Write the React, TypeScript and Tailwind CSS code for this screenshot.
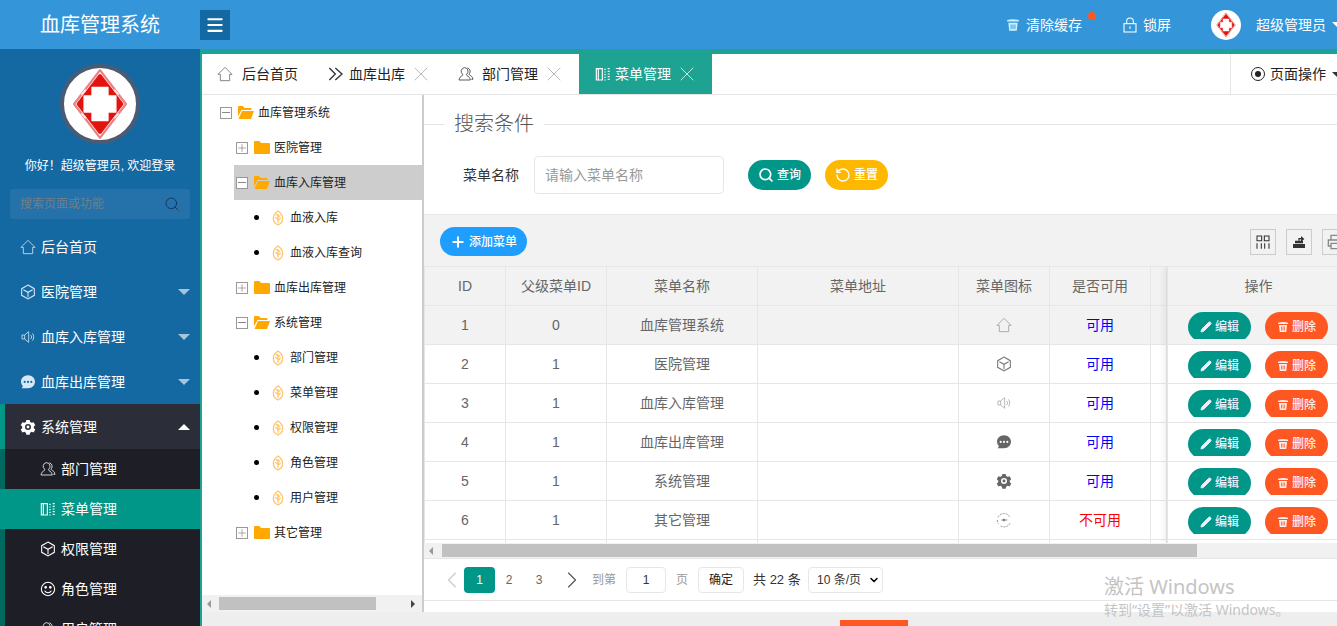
import { ChevronLeft, ChevronRight, Plus, X, Menu, Search, RotateCw, ChevronDown, Pencil } from 'lucide-react';

type IconProps = { className?: string };

const svgBase = { fill: 'none', stroke: 'currentColor', strokeWidth: 1.2, viewBox: '0 0 24 24' };

function HouseIcon({ className }: IconProps) {
  return (
    <svg {...svgBase} className={className}>
      <path d="M1.5 12.5 12 2l10.5 10.5H19V22H5v-9.5z" />
    </svg>
  );
}

function DoubleChevronIcon({ className }: IconProps) {
  return (
    <svg {...svgBase} strokeWidth={2} className={className}>
      <path d="M2 3l9 9-9 9M11 3l10 9-10 9" />
    </svg>
  );
}

function BoxIcon({ className }: IconProps) {
  return (
    <svg {...svgBase} strokeWidth={1.6} className={className}>
      <path d="M12 1.5 21.500 7v10L12 22.500 2.500 17V7z" />
      <path d="M5 8.500l7 4 7-4M12 12.500V20" />
    </svg>
  );
}

function SpeakerIcon({ className }: IconProps) {
  return (
    <svg {...svgBase} className={className}>
      <path d="M3 9h4l6-5v16l-6-5H3z" />
      <path d="M7 9v6M16 9a4 4 0 0 1 0 6M18.500 6.500a8 8 0 0 1 0 11" />
    </svg>
  );
}

function ChatIcon({ className }: IconProps) {
  return (
    <svg viewBox="0 0 24 24" fill="currentColor" className={className}>
      <path
        fillRule="evenodd"
        d="M12 2c5.800 0 10.500 4.300 10.500 9.800S17.800 21.500 12 21.500H2.500l1.900-3A9.600 9.600 0 0 1 1.500 11.800C1.500 6.300 6.200 2 12 2zM7 10.300a1.600 1.600 0 1 0 0 3.200 1.600 1.600 0 0 0 0-3.200zm5 0a1.600 1.600 0 1 0 0 3.200 1.600 1.600 0 0 0 0-3.200zm5 0a1.600 1.600 0 1 0 0 3.200 1.600 1.600 0 0 0 0-3.200z"
      />
    </svg>
  );
}

function GearIcon({ className }: IconProps) {
  return (
    <svg viewBox="0 0 24 24" fill="currentColor" className={className}>
      <path
        fillRule="evenodd"
        d="M9.500 1.500h5l.7 3 2.300 1.300 2.900-.9 2.500 4.300-2.200 2.100v2.400l2.200 2.100-2.500 4.300-2.900-.9-2.300 1.300-.7 3h-5l-.7-3-2.300-1.300-2.900.9L1.100 15.800l2.200-2.100v-2.400L1.100 9.200l2.500-4.300 2.900.9 2.300-1.300zM12 7.500a4.500 4.500 0 1 0 0 9 4.500 4.500 0 0 0 0-9zm0 2.300a2.200 2.200 0 1 1 0 4.400 2.200 2.200 0 0 1 0-4.400z"
      />
    </svg>
  );
}

function SpinnerIcon({ className }: IconProps) {
  return (
    <svg {...svgBase} className={className}>
      <path d="M20.500 7A10 10 0 0 0 3 8M2 12a10 10 0 0 0 1.500 5.500M7 21a10 10 0 0 0 14-4" strokeDasharray="3 1.500" />
      <path d="M8 12h9" />
      <circle cx="12" cy="12" r="1.500" fill="currentColor" />
    </svg>
  );
}

function UserIcon({ className }: IconProps) {
  return (
    <svg {...svgBase} className={className}>
      <path d="M9.500 2.500a5.500 5.500 0 0 1 3.500 9.800c-.5.700-.4 1.600.4 2 2.500 1.200 4.600 3.300 5 6.700H1.500c.4-3.400 2.500-5.500 5-6.700.8-.4.900-1.300.4-2A5.500 5.500 0 0 1 9.500 2.500z" />
      <path d="M14 2.800a5.500 5.500 0 0 1 3 8.800c-.5.800-.3 1.500.4 1.900 2.500 1.200 4.700 3.200 5.100 6.500H20" />
    </svg>
  );
}

function MenuBookIcon({ className }: IconProps) {
  return (
    <svg {...svgBase} strokeWidth={1.7} className={className}>
      <path d="M2 4h9v17H2zM5 4v17h6" />
      <path d="M14 5h2M14 9h2M14 13h2M14 17h2M14 21h2M19 4h3M19 8h3M19 12h3M19 16h3M19 20h3" />
    </svg>
  );
}

function SmileIcon({ className }: IconProps) {
  return (
    <svg {...svgBase} strokeWidth={1.6} className={className}>
      <circle cx="12" cy="12" r="10" />
      <circle cx="8.500" cy="9.500" r="1.200" fill="currentColor" />
      <circle cx="15.500" cy="9.500" r="1.200" fill="currentColor" />
      <path d="M7 14.500c1.200 2 3 3 5 3s3.800-1 5-3" />
    </svg>
  );
}

function TrashIcon({ className }: IconProps) {
  return (
    <svg viewBox="0 0 24 24" fill="currentColor" className={className}>
      <path
        fillRule="evenodd"
        d="M2 3.500c3-1 6.500-1.500 10-1.500s7 .5 10 1.500V6H2zM4 8h16l-1.500 14h-13zm4 3v8h1.500v-8zm3.300 0v8h1.500v-8zm3.300 0v8h1.500v-8z"
      />
    </svg>
  );
}

function LockIcon({ className }: IconProps) {
  return (
    <svg {...svgBase} strokeWidth={1.6} className={className}>
      <rect x="3" y="10" width="18" height="12.500" />
      <path d="M7 10V6.500a5 5 0 0 1 10 0V10M12 14v4" />
    </svg>
  );
}

function LeafIcon({ className }: IconProps) {
  return (
    <svg {...svgBase} strokeWidth={1.8} className={className}>
      <path d="M12 1.500c4.500 3 7 6.500 7 11 0 5-3 8.500-7 10-4-1.500-7-5-7-10 0-4.500 2.500-8 7-11z" />
      <path d="M12 6v14M12 11l3.500-3M12 15.500l4-3.500M12 9 9 6.500M12 14 8 11" />
    </svg>
  );
}

function FolderClosed({ className }: IconProps) {
  return (
    <svg viewBox="0 0 16 13" fill="#ffa800" className={className}>
      <path d="M0 1a1 1 0 0 1 1-1h4.500l1.500 2H15a1 1 0 0 1 1 1v9a1 1 0 0 1-1 1H1a1 1 0 0 1-1-1z" />
    </svg>
  );
}

function FolderOpen({ className }: IconProps) {
  return (
    <svg viewBox="0 0 16 13" fill="#ffa800" className={className}>
      <path d="M0 1a1 1 0 0 1 1-1h4l1.500 2h6a1 1 0 0 1 1 1v1H3.500L0 10.500z" />
      <path d="M4 5h12l-3 8H.5z" />
    </svg>
  );
}

function ExportIcon({ className }: IconProps) {
  return (
    <svg viewBox="0 0 24 24" fill="currentColor" className={className}>
      <path d="M3 15h18v6H3zM6 10h12v4H6z" />
      <path d="M11 10V6h4V3l5 4.500-5 4.500V8h-2v2z" />
    </svg>
  );
}

function PrintIcon({ className }: IconProps) {
  return (
    <svg {...svgBase} strokeWidth={2} className={className}>
      <path d="M6 8V2h12v6M6 18H2V9h20v9h-4M6 14h12v8H6z" />
    </svg>
  );
}

function ColumnsIcon({ className }: IconProps) {
  return (
    <svg {...svgBase} strokeWidth={1.6} className={className}>
      <path d="M3 3h7v7H3zM14 3h7v7h-7zM3 14v8M9.500 14v8M14.500 14v8M21 14v8" />
    </svg>
  );
}

function HospitalLogo({ className }: IconProps) {
  return (
    <svg viewBox="0 0 100 100" className={className}>
      <path d="M50 3 86 50 50 97 14 50z" fill="none" stroke="#ec7f84" strokeWidth="3" strokeLinejoin="round" />
      <path d="M50 11 80 50 50 89 20 50z" fill="#e1140f" stroke="#e1140f" strokeWidth="5" strokeLinejoin="round" />
      <path d="M39 27h22v12h11v22H61v12H39V61H28V39h11z" fill="#fff" stroke="#fff" strokeLinejoin="round" strokeWidth="2" />
      <path d="M30 30 24 37M70 30l6 7M30 70l-6-7M70 70l6-7" stroke="#fff" strokeWidth="2" />
    </svg>
  );
}

function TreeToggle({ open }: { open: boolean }) {
  return (
    <span className="flex h-[12px] w-[12px] shrink-0 items-center justify-center border border-[#999] bg-white">
      {open ? <span className="h-px w-[8px] bg-[#888]" /> : <Plus className="h-[12px] w-[12px] shrink-0 text-[#777]" strokeWidth={1.2} />}
    </span>
  );
}

const treeRows = [
  { label: '血库管理系统', level: 0, open: true },
  { label: '医院管理', level: 1, open: false },
  { label: '血库入库管理', level: 1, open: true, selected: true },
  { label: '血液入库', level: 2 },
  { label: '血液入库查询', level: 2 },
  { label: '血库出库管理', level: 1, open: false },
  { label: '系统管理', level: 1, open: true },
  { label: '部门管理', level: 2 },
  { label: '菜单管理', level: 2 },
  { label: '权限管理', level: 2 },
  { label: '角色管理', level: 2 },
  { label: '用户管理', level: 2 },
  { label: '其它管理', level: 1, open: false },
];

const menuRows = [
  { id: 1, parent: 0, name: '血库管理系统', icon: HouseIcon, cls: 'text-[#999]', enabled: true },
  { id: 2, parent: 1, name: '医院管理', icon: BoxIcon, cls: 'text-[#777]', enabled: true },
  { id: 3, parent: 1, name: '血库入库管理', icon: SpeakerIcon, cls: 'text-[#aaa]', enabled: true },
  { id: 4, parent: 1, name: '血库出库管理', icon: ChatIcon, cls: 'text-[#666]', enabled: true },
  { id: 5, parent: 1, name: '系统管理', icon: GearIcon, cls: 'text-[#666]', enabled: true },
  { id: 6, parent: 1, name: '其它管理', icon: SpinnerIcon, cls: 'text-[#777]', enabled: false },
];

const headers = ['ID', '父级菜单ID', '菜单名称', '菜单地址', '菜单图标', '是否可用', ''];

function SideItem({ icon: Icon, label, caret }: { icon: (p: IconProps) => React.ReactNode; label: string; caret?: boolean }) {
  return (
    <div className="flex h-[45px] items-center pl-5 pr-[10px] text-sm text-white">
      <Icon className="h-4 w-4 text-[#d7e8f5]" />
      <span className="ml-[5px] flex-1">{label}</span>
      {caret && <span className="border-x-[6px] border-t-[6px] border-x-transparent border-t-[#a9c4d9]" />}
    </div>
  );
}

function SubItem({ icon: Icon, label, active }: { icon: (p: IconProps) => React.ReactNode; label: string; active?: boolean }) {
  return (
    <div className={`flex h-10 items-center text-sm text-white ${active ? 'bg-[#009688] pl-10' : 'ml-[5px] bg-[#1e1f26] pl-[35px]'}`}>
      <Icon className="h-4 w-4" />
      <span className="ml-[5px]">{label}</span>
    </div>
  );
}

function Sidebar() {
  return (
    <aside className="flex w-[202px] shrink-0 flex-col overflow-hidden border-r-2 border-[#1ea292] bg-[#1569a3]">
      <div className="mx-auto mt-[15px] flex h-20 w-20 shrink-0 items-center justify-center rounded-full border-4 border-[#4a5b73] bg-white">
        <HospitalLogo className="h-[72px] w-[72px]" />
      </div>
      <p className="mt-3 h-5 shrink-0 text-center text-xs leading-5 text-white">你好！超级管理员, 欢迎登录</p>
      <div className="mx-[10px] mt-[13px] flex h-[30px] shrink-0 items-center justify-between rounded-sm bg-[#2472a9] px-[10px] text-xs text-[#6f7f8c]">
        <span>搜索页面或功能</span>
        <Search className="h-4 w-4 text-[#12385a]" strokeWidth={1.5} />
      </div>
      <nav className="mt-[5px] shrink-0">
        <SideItem icon={HouseIcon} label="后台首页" />
        <SideItem icon={BoxIcon} label="医院管理" caret />
        <SideItem icon={SpeakerIcon} label="血库入库管理" caret />
        <SideItem icon={ChatIcon} label="血库出库管理" caret />
        <div className="bg-[#00695f]">
          <div className="bg-[#009688] pl-[5px]">
            <div className="flex h-[45px] items-center bg-[#2b2e38] pl-[15px] pr-[10px] text-sm text-white">
              <GearIcon className="h-4 w-4" />
              <span className="ml-[5px] flex-1">系统管理</span>
              <span className="border-x-[6px] border-b-[6px] border-x-transparent border-b-white" />
            </div>
          </div>
          <SubItem icon={UserIcon} label="部门管理" />
          <SubItem icon={MenuBookIcon} label="菜单管理" active />
          <SubItem icon={BoxIcon} label="权限管理" />
          <SubItem icon={SmileIcon} label="角色管理" />
          <SubItem icon={UserIcon} label="用户管理" />
        </div>
      </nav>
    </aside>
  );
}

function TopBar() {
  return (
    <header className="flex h-[49px] shrink-0 items-center overflow-hidden bg-[#3595d9] text-white">
      <div className="w-[200px] shrink-0 text-center text-xl">血库管理系统</div>
      <button className="flex h-[30px] w-[30px] shrink-0 items-center justify-center bg-[#1569a3]">
        <Menu className="h-5 w-5" strokeWidth={2.5} />
      </button>
      <div className="ml-[776px] flex shrink-0 items-center text-sm">
        <TrashIcon className="h-[14px] w-[14px] text-[#c8f0ff]" />
        <span className="ml-[6px]">清除缓存</span>
        <span className="mb-[18px] ml-[6px] h-2 w-2 rounded-full bg-[#ff5722]" />
        <LockIcon className="ml-[26px] h-4 w-4" />
        <span className="ml-[5px]">锁屏</span>
        <span className="ml-10 flex h-[30px] w-[30px] items-center justify-center rounded-full bg-white">
          <HospitalLogo className="h-[26px] w-[26px]" />
        </span>
        <span className="ml-[15px]">超级管理员</span>
        <span className="ml-[6px] border-x-[6px] border-t-[6px] border-x-transparent border-t-white" />
      </div>
    </header>
  );
}

function Tab({ icon: Icon, label, width, iconGap, active }: { icon: (p: IconProps) => React.ReactNode; label: string; width: string; iconGap: string; active?: boolean }) {
  return (
    <div className={`flex h-full shrink-0 items-center text-sm ${width} ${active ? 'bg-[#1ea292] px-4 text-white' : 'text-[#222]'}`}>
      <Icon className={`h-4 w-4 shrink-0 ${active ? 'text-white' : 'text-[#333]'}`} />
      <span className={`whitespace-nowrap ${iconGap}`}>{label}</span>
      <X className={`ml-[4px] h-6 w-6 shrink-0 ${active ? 'text-[#c8e6e2]' : 'text-[#bbb]'}`} strokeWidth={1} />
    </div>
  );
}

function TabBar() {
  return (
    <div className="flex h-[46px] shrink-0 items-center overflow-hidden border-t-[5px] border-b border-[#1ea292] border-b-[#e4e4e4] bg-white">
      <div className="flex h-full w-[126px] shrink-0 items-center pl-[15px] text-sm text-[#222]">
        <HouseIcon className="h-4 w-4 text-[#667]" />
        <span className="ml-[9px]">后台首页</span>
      </div>
      <Tab icon={DoubleChevronIcon} label="血库出库" width="w-[130px]" iconGap="ml-[5px]" />
      <Tab icon={UserIcon} label="部门管理" width="w-[121px]" iconGap="ml-[8px]" />
      <Tab icon={MenuBookIcon} label="菜单管理" width="w-[133px]" iconGap="ml-[4px]" active />
      <div className="ml-[518px] flex h-full shrink-0 items-center border-l border-[#e4e4e4] pl-5 text-sm text-[#222]">
        <span className="flex h-[14px] w-[14px] items-center justify-center rounded-full border border-[#222]">
          <span className="h-[6px] w-[6px] rounded-full bg-[#222]" />
        </span>
        <span className="ml-[5px] whitespace-nowrap">页面操作</span>
        <span className="ml-[6px] border-x-[5px] border-t-[5px] border-x-transparent border-t-[#333]" />
      </div>
    </div>
  );
}

function TreePanel() {
  return (
    <div className="flex w-[222px] shrink-0 flex-col border-r-2 border-[#cccccc] bg-white">
      <div className="flex-1 overflow-hidden text-xs text-[#222]">
        {treeRows.map((row) => (
          <div
            key={row.label + row.level}
            className={`flex h-[35px] items-center ${row.selected ? 'ml-8 bg-[#cdcdcd] pl-[2px]' : row.level === 0 ? 'pl-[18px]' : row.level === 1 ? 'pl-[34px]' : 'pl-[52px]'}`}
          >
            {row.level === 2 ? (
              <>
                <span className="h-[5px] w-[5px] rounded-full bg-black" />
                <LeafIcon className="ml-[11px] h-4 w-4 text-[#ffc36b]" />
                <span className="ml-[4px]">{row.label}</span>
              </>
            ) : (
              <>
                <TreeToggle open={!!row.open} />
                {row.open ? <FolderOpen className="ml-[6px] h-[13px] w-4" /> : <FolderClosed className="ml-[6px] h-[13px] w-4" />}
                <span className="ml-[4px]">{row.label}</span>
              </>
            )}
          </div>
        ))}
      </div>
      <div className="flex h-[17px] shrink-0 items-center bg-[#f1f1f1] text-[#666]">
        <span className="ml-[5px] border-y-[4px] border-r-[4px] border-y-transparent border-r-[#999]" />
        <span className="ml-2 h-[13px] w-[157px] bg-[#c1c1c1]" />
        <span className="ml-[35px] border-y-[4px] border-l-[4px] border-y-transparent border-l-[#444]" />
      </div>
    </div>
  );
}

function SearchForm() {
  return (
    <section className="h-[120px] shrink-0 border-b border-[#e8e8e8] bg-white pt-[14px]">
      <div className="flex h-[30px] w-[913px] items-center">
        <span className="h-px w-5 bg-[#e4e4e4]" />
        <span className="px-[10px] text-xl font-light text-[#555]">搜索条件</span>
        <span className="h-px flex-1 bg-[#e4e4e4]" />
      </div>
      <div className="mt-[17px] flex items-center pl-[39px]">
        <span className="w-[71px] text-sm text-[#333]">菜单名称</span>
        <div className="flex h-[38px] w-[190px] items-center rounded-sm border border-[#e6e6e6] px-[10px] text-sm text-[#999]">请输入菜单名称</div>
        <button className="ml-6 flex h-[30px] w-[63px] items-center justify-center gap-[3px] rounded-full bg-[#009688] text-xs font-medium text-white">
          <Search className="h-4 w-4" strokeWidth={2.5} />
          查询
        </button>
        <button className="ml-[14px] flex h-[30px] w-[63px] items-center justify-center gap-[3px] rounded-full bg-[#ffb800] text-xs font-medium text-white">
          <RotateCw className="h-4 w-4 -scale-x-100" strokeWidth={2} />
          重置
        </button>
      </div>
    </section>
  );
}

function Toolbar() {
  return (
    <div className="flex h-[51px] w-[925px] shrink-0 items-center bg-[#f2f2f2] pl-4 pt-[2px]">
      <button className="flex h-[29px] w-[87px] items-center justify-center gap-[3px] rounded-full bg-[#1e9fff] text-xs font-medium text-white">
        <Plus className="h-4 w-4" strokeWidth={3} />
        添加菜单
      </button>
      <div className="ml-[723px] flex gap-[10px]">
        <span className="flex h-[26px] w-[26px] items-center justify-center border border-[#ccc] text-[#333]"><ColumnsIcon className="h-4 w-4" /></span>
        <span className="flex h-[26px] w-[26px] items-center justify-center border border-[#ccc] text-[#333]"><ExportIcon className="h-4 w-4" /></span>
        <span className="flex h-[26px] w-[26px] items-center justify-center border border-[#ccc] text-[#888]"><PrintIcon className="h-4 w-4" /></span>
      </div>
    </div>
  );
}

function ActionButtons() {
  return (
    <div className="flex gap-[14px] pl-[20px]">
      <div className="h-[27px] w-[63px] overflow-hidden">
        <div className="flex h-[30px] w-[63px] items-center justify-center gap-[3px] rounded-full bg-[#009688] pb-[1px] text-xs font-medium text-[#eef]">
          <Pencil className="h-3 w-3" fill="currentColor" />
          编辑
        </div>
      </div>
      <div className="h-[27px] w-[63px] overflow-hidden">
        <div className="flex h-[30px] w-[63px] items-center justify-center gap-[3px] rounded-full bg-[#ff5722] pb-[1px] text-xs font-medium text-[#fee]">
          <TrashIcon className="h-3 w-3" />
          删除
        </div>
      </div>
    </div>
  );
}

function MenuTable() {
  const colWidths = ['w-[82px]', 'w-[101px]', 'w-[151px]', 'w-[201px]', 'w-[91px]', 'w-[101px]', 'w-[16px]'];
  const cellClass = 'h-[39px] border-r border-b border-[#e6e6e6] p-0 text-center text-sm font-normal';

  return (
    <div className="flex h-[277px] w-[925px] shrink-0 overflow-hidden border-t border-[#e6e6e6]">
      <table className="h-fit w-[743px] shrink-0 table-fixed border-separate border-spacing-0 text-[#666]">
        <colgroup>
          {colWidths.map((w, i) => <col key={i} className={w} />)}
        </colgroup>
        <thead>
          <tr className="bg-[#f2f2f2]">
            {headers.map((h, i) => <th key={i} className={`${cellClass} ${i === 0 ? 'border-l' : ''}`}>{h}</th>)}
          </tr>
        </thead>
        <tbody>
          {menuRows.map((row) => {
            const Icon = row.icon;
            return (
              <tr key={row.id} className={row.id === 1 ? 'bg-[#f2f2f2]' : 'bg-white'}>
                <td className={`${cellClass} border-l`}>{row.id}</td>
                <td className={cellClass}>{row.parent}</td>
                <td className={cellClass}>{row.name}</td>
                <td className={cellClass} />
                <td className={cellClass}>
                  <Icon className={`mx-auto h-4 w-4 ${row.cls}`} />
                </td>
                <td className={`${cellClass} ${row.enabled ? 'text-[#0000ff]' : 'text-[#ff0000]'}`}>{row.enabled ? '可用' : '不可用'}</td>
                <td className={cellClass} />
              </tr>
            );
          })}
          {/* next row, cut off by the scrollbar */}
          <tr className="bg-white">
            {headers.map((h, i) => <td key={h + i} className={`${cellClass} ${i === 0 ? 'border-l' : ''}`} />)}
          </tr>
        </tbody>
      </table>
      <div className="relative w-[182px] shrink-0 shadow-[-4px_0_6px_rgba(0,0,0,0.05)]">
        <div className="flex h-[39px] items-center justify-center border-b border-l border-[#e6e6e6] bg-[#f2f2f2] text-sm text-[#666]">操作</div>
        {menuRows.map((row) => (
          <div key={row.id} className={`flex h-[39px] items-center border-b border-l border-[#e6e6e6] pt-[1px] ${row.id === 1 ? 'bg-[#f2f2f2]' : 'bg-white'}`}>
            <ActionButtons />
          </div>
        ))}
        <div className="h-[39px] border-l border-[#e6e6e6] bg-white" />
      </div>
    </div>
  );
}

function TableScrollbar() {
  return (
    <div className="flex h-4 shrink-0 items-center border-b border-[#e6e6e6] bg-[#f1f1f1]">
      <span className="ml-[5px] border-y-[4px] border-r-[4px] border-y-transparent border-r-[#999]" />
      <span className="ml-[9px] h-[13px] w-[755px] bg-[#c1c1c1]" />
    </div>
  );
}

function Pager() {
  return (
    <div className="flex h-[42px] shrink-0 items-center border-b border-[#e6e6e6] bg-white pl-[14px] text-xs text-[#666]">
      <ChevronLeft className="h-7 w-7 shrink-0 text-[#ccc]" strokeWidth={1} />
      <span className="-ml-[2px] flex h-[26px] w-[31px] items-center justify-center rounded-sm bg-[#009688] text-white">1</span>
      <span className="w-[28px] text-center">2</span>
      <span className="w-[32px] text-center">3</span>
      <ChevronRight className="ml-[3px] h-7 w-7 shrink-0 text-[#555]" strokeWidth={1} />
      <span className="ml-[6px] text-[#999]">到第</span>
      <span className="ml-[10px] flex h-[26px] w-10 items-center justify-center rounded-sm border border-[#e6e6e6] text-[#333]">1</span>
      <span className="ml-[10px] text-[#999]">页</span>
      <span className="ml-[10px] flex h-[26px] w-[46px] items-center justify-center rounded-sm border border-[#e6e6e6] text-[#222]">确定</span>
      <span className="ml-[9px] w-[47px] whitespace-nowrap text-[13px] text-[#333]">共 22 条</span>
      <span className="ml-2 flex h-[26px] w-[75px] items-center justify-between rounded-sm border border-[#e6e6e6] pl-2 pr-[2px] text-[#333]">
        10 条/页
        <ChevronDown className="h-3 w-3 text-black" strokeWidth={3} />
      </span>
    </div>
  );
}

export default function App() {
  return (
    <div className="relative flex h-[626px] w-[1337px] flex-col overflow-hidden bg-white font-['Liberation_Sans','Noto_Sans_CJK_SC',sans-serif]">
      <TopBar />
      <div className="flex min-h-0 flex-1">
        <Sidebar />
        <div className="flex min-w-0 flex-1 flex-col">
          <TabBar />
          <div className="flex h-[517px] shrink-0">
            <TreePanel />
            <main className="flex min-w-0 flex-1 flex-col overflow-hidden bg-white">
              <SearchForm />
              <Toolbar />
              <MenuTable />
              <TableScrollbar />
              <Pager />
            </main>
          </div>
          <div className="flex-1 bg-[#eeeeee] pl-[638px] pt-2">
            <div className="h-6 w-[68px] bg-[#ff5722]" />
          </div>
        </div>
      </div>
      {/* windows watermark */}
      <div className="pointer-events-none absolute top-[574px] left-[1104px] whitespace-nowrap font-['Noto_Sans','Noto_Sans_CJK_SC',sans-serif] text-[#c4c4c4]">
        <p className="text-xl leading-[26px]">激活 Windows</p>
        <p className="text-sm leading-5">转到“设置”以激活 Windows。</p>
      </div>
    </div>
  );
}
